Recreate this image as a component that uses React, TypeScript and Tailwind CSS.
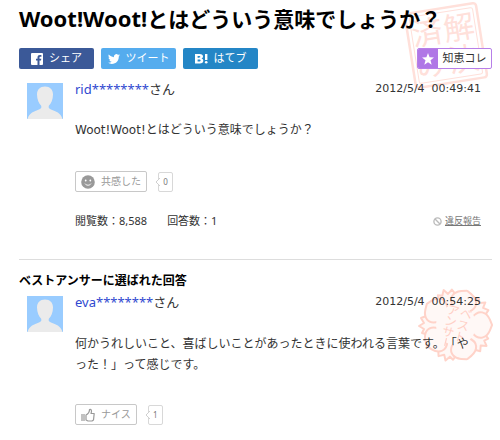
import React from 'react';

const jp = "font-['Noto_Sans','Noto_Sans_CJK_JP',sans-serif]";
const wide = "font-['DejaVu_Sans','Noto_Sans_CJK_JP',sans-serif]";

function Avatar() {
  return (
    <svg viewBox="0 0 36 36" className="h-9 w-9 shrink-0" aria-hidden="true">
      <rect width="36" height="36" fill="#99ccff" />
      <path
        d="M18 3.500c-5 0-8 3-8 8 0 5 2 9 4 11 1 2 0 3-2 4-5 2-9.500 3-11.500 9.500h35c-2-6.500-6.500-7.500-11.500-9.500-2-1-3-2-2-4 2-2 4-6 4-11 0-5-3-8-8-8z"
        fill="#ebebeb"
      />
    </svg>
  );
}

function SolvedStamp() {
  return (
    <svg
      viewBox="0 0 92 92"
      className="pointer-events-none absolute top-0 right-2 h-[92px] w-[92px]"
      aria-hidden="true"
    >
      <g transform="rotate(-9 46 46)" fill="none" stroke="#ffe0da">
        <rect x="10" y="8" width="72" height="75" rx="3" strokeWidth="2.500" />
        <rect x="14" y="12" width="64" height="67" rx="2" strokeWidth="1" />
        <g
          className="font-['Noto_Sans_CJK_JP',sans-serif]"
          fontSize="31"
          fill="#ffe0da"
          stroke="none"
        >
          <text x="46" y="41">解</text>
          <text x="46" y="73">決</text>
          <text x="14" y="41">済</text>
          <text x="14" y="73">み</text>
        </g>
      </g>
    </svg>
  );
}

const innerPetal = 'M0 0L-7 -17C-15 -23 -12 -30 -5 -33L0 -35L5 -33C12 -30 15 -23 7 -17Z';
const outerPetal = 'M-6 -18L-10 -27L-8 -34L-4 -32L-1 -37L2 -32L7 -35L10 -27L6 -18Z';
const innerAngles = [18, 90, 162, 234, 306];
const outerAngles = [342, 54, 126, 198, 270];

function BestAnswerStamp() {
  return (
    <svg viewBox="0 0 76 76" className="h-full w-full" aria-hidden="true">
      <g transform="translate(39 38)" strokeLinejoin="round">
        {outerAngles.map((angle) => (
          <path key={angle} d={outerPetal} transform={`rotate(${angle})`} fill="#fff8f6" stroke="#ffd3c9" strokeWidth="2" />
        ))}
        {innerAngles.map((angle) => (
          <path key={angle} d={innerPetal} transform={`rotate(${angle})`} stroke="#ffd3c9" strokeWidth="4" />
        ))}
        {/* fills go last so that only the flower's outline stays visible */}
        <circle r="20" fill="#fff8f6" />
        {innerAngles.map((angle) => (
          <path key={angle} d={innerPetal} transform={`rotate(${angle})`} fill="#fff8f6" />
        ))}
        <g
          transform="rotate(14)"
          className="font-['Noto_Sans_CJK_JP',sans-serif]"
          fontSize="12"
          fill="#ffcfc5"
        >
          <text x="1" y="-9">ベ</text>
          <text x="1" y="3">ス</text>
          <text x="1" y="15">ト</text>
          <text x="-12" y="-9">ア</text>
          <text x="-12" y="2">ン</text>
          <text x="-12" y="13">サ</text>
          <path d="M-6 15v8" stroke="#ffcfc5" strokeWidth="1.200" />
        </g>
      </g>
    </svg>
  );
}

interface CountProps {
  value: number;
}

function Count({ value }: CountProps) {
  return (
    <span className="relative flex h-5 w-[15px] items-center justify-center rounded-[2px] border border-[#d8d8d8] bg-white text-[8px] text-[#777]">
      <svg viewBox="0 0 5 8" className="absolute -left-1 h-2 w-[5px]" aria-hidden="true">
        <path d="M5 0L1 4l4 4" fill="#fff" stroke="#d0d0d0" />
      </svg>
      {value}
    </span>
  );
}

interface PostProps {
  user: string;
  date: string;
  children: React.ReactNode;
}

function Post({ user, date, children }: PostProps) {
  return (
    <div className="flex gap-3 pr-[11px] pl-2">
      <Avatar />
      <div className="min-w-0 flex-1">
        <div className="relative flex items-start justify-between">
          <p className="text-[13px] leading-3 text-[#333]">
            <a href="#user" className="text-[#2f48d0]">{user}</a>さん
          </p>
          <time className={`${wide} text-[11px] leading-3 whitespace-pre text-[#333]`}>{date}</time>
        </div>
        {children}
      </div>
    </div>
  );
}

const shareButton = 'flex h-[21px] w-[75px] items-center justify-center gap-[6px] rounded-[2px] text-[11px] text-white';
const voteButton = 'flex h-[21px] items-center gap-[6px] rounded-[2px] border border-[#c8c8c8] bg-white px-[5px] text-[10px] text-[#999]';

export default function App() {
  return (
    <main lang="ja" className={`${jp} relative bg-white pr-2 pb-4 pl-[19px] text-black [text-spacing-trim:space-all]`}>
      <SolvedStamp />

      <h1 className="relative pt-[3px] text-[21px] leading-[30px] font-bold whitespace-nowrap">
        <span className="text-[22px]">Woot!Woot!</span>とはどういう意味でしょうか？
      </h1>

      <div className="relative mt-[14px] flex items-center justify-between">
        <div className="flex gap-[7px]">
          <button type="button" className={`${shareButton} bg-[#3b5998]`}>
            <svg viewBox="0 0 12 12" className="h-3 w-3" aria-hidden="true">
              <rect width="12" height="12" rx="1" fill="#fff" />
              <path d="M6.500 12V7.600H5V5.800h1.500V4.500C6.500 2.800 7.400 2 9 2h1.400v1.700H9.400c-.7 0-.9.300-.9.900v1.200h1.800L10 7.600H8.500V12z" fill="#3b5998" />
            </svg>
            シェア
          </button>
          <button type="button" className={`${shareButton} bg-[#55acee]`}>
            <svg viewBox="0 0 24 24" className="h-3 w-3" fill="#fff" aria-hidden="true">
              <path d="M23.950 4.570a10 10 0 01-2.820.77 4.960 4.960 0 002.160-2.720c-.95.55-2 .95-3.130 1.180a4.920 4.920 0 00-8.380 4.480C7.690 8.090 4.070 6.130 1.640 3.160a4.820 4.820 0 00-.67 2.480c0 1.710.87 3.210 2.190 4.100a4.900 4.900 0 01-2.230-.62v.06a4.920 4.920 0 003.950 4.830 5 5 0 01-2.210.08 4.940 4.940 0 004.600 3.420A9.870 9.870 0 010 19.540a14 14 0 007.550 2.210c9.050 0 14-7.500 14-13.980 0-.21 0-.42-.02-.63a9.940 9.940 0 002.420-2.570z" />
            </svg>
            ツイート
          </button>
          <button type="button" className={`${shareButton} bg-[#2486c6]`}>
            <svg viewBox="0 0 13 11" className="h-[11px] w-[13px]" fill="#fff" aria-hidden="true">
              <path fillRule="evenodd" d="M0 1h4.500C7 1 8 2 8 3.500 8 4.700 7.300 5.300 6.300 5.500 7.600 5.700 8.300 6.500 8.300 7.700 8.300 9.500 7 10.500 4.800 10.500H0zM2.600 3v1.700h1.300c1 0 1.400-.3 1.400-.9S4.900 3 4 3zM2.600 6.600v1.900h1.500c1 0 1.500-.3 1.500-1s-.5-.9-1.400-.9zM10 1h2.400v6H10z" />
              <circle cx="11.200" cy="9.200" r="1.300" />
            </svg>
            はてブ
          </button>
        </div>
        <button type="button" className="flex h-[21px] w-[75px] items-stretch overflow-hidden rounded-[2px] border border-[#b77fe8] bg-white text-[11px] text-[#333]">
          <span className="flex w-5 items-center justify-center bg-[#b077e6]">
            <svg viewBox="0 0 24 24" className="h-3 w-3" fill="#fff" aria-hidden="true">
              <path d="M12 0l3.200 8.500 8.800.4-7 5.600 2.400 8.800L12 18.300l-7.400 5L7 14.500 0 8.900l8.800-.4z" />
            </svg>
          </span>
          <span className="flex flex-1 items-center justify-center">知恵コレ</span>
        </button>
      </div>

      <div className="mt-[14px]">
        <Post user="rid********" date="2012/5/4  00:49:41">
          <p className={`${wide} mt-[26px] text-[12px] leading-[18px] text-[#333]`}>
            Woot!Woot!とはどういう意味でしょうか？
          </p>
          <div className="mt-8 flex items-center gap-[11px]">
            <button type="button" className={voteButton}>
              <svg viewBox="0 0 14 14" className="h-[14px] w-[14px]" aria-hidden="true">
                <circle cx="7" cy="7" r="6.800" fill="#999" />
                <circle cx="4.700" cy="5.500" r=".9" fill="#fff" />
                <circle cx="9.300" cy="5.500" r=".9" fill="#fff" />
                <path d="M4 8.700c1.500 2 4.500 2 6 0" fill="none" stroke="#fff" />
              </svg>
              共感した
            </button>
            <Count value={0} />
          </div>
          <div className="mt-5 flex items-center text-[11px] leading-[18px] text-[#333]">
            <span className="mr-5">閲覧数：8,588</span>
            <span>回答数：1</span>
            <a href="#report" className="ml-auto flex items-center gap-[3px] text-[9px] text-[#777] underline">
              <svg viewBox="0 0 10 10" className="h-[9px] w-[9px]" fill="none" stroke="#bbb" strokeWidth="1.500" aria-hidden="true">
                <circle cx="5" cy="5" r="4" />
                <path d="M2 2l6 6" />
              </svg>
              違反報告
            </a>
          </div>
        </Post>
      </div>

      <section className="relative mt-[29px] border-t border-[#ddd] pt-3">
        <div className="pointer-events-none absolute top-[27px] -right-px h-[76px] w-[76px]">
          <BestAnswerStamp />
        </div>
        <h2 className="mb-[6px] text-[12px] leading-[18px] font-bold">ベストアンサーに選ばれた回答</h2>
        <Post user="eva********" date="2012/5/4  00:54:25">
          <p className={`${wide} relative mt-[26px] pr-2 text-[12px] leading-[21px] text-[#333]`}>
            何かうれしいこと、喜ばしいことがあったときに使われる言葉です。「やった！」って感じです。
          </p>
          <div className="mt-7 flex items-center gap-[11px]">
            <button type="button" className={voteButton}>
              <svg viewBox="0 0 14 14" className="h-[14px] w-[14px]" fill="none" stroke="#999" strokeWidth="1.200" aria-hidden="true">
                <path d="M1 6v7M3 6v7M5 7c2-1 3.500-3 3.500-5.500 2-.5 2.500 1.500 1.500 4h3.200l-.7 6.500-1.500 1H7l-2-1z" strokeLinejoin="round" />
              </svg>
              ナイス
            </button>
            <Count value={1} />
          </div>
        </Post>
      </section>
    </main>
  );
}
